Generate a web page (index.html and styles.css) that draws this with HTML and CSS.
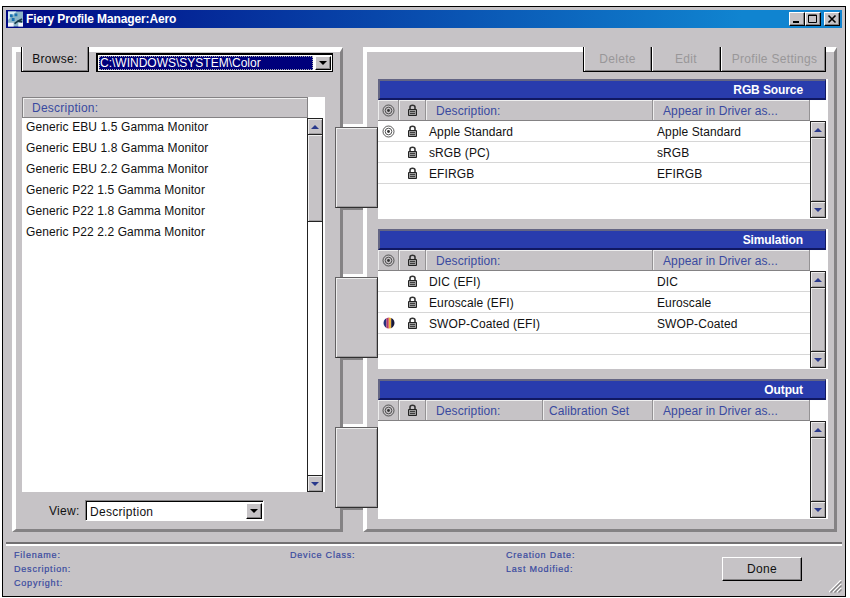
FILE: index.html
```html
<!DOCTYPE html>
<html lang="en">
<head>
    <meta charset="UTF-8">
    <meta name="viewport" content="width=device-width, initial-scale=1.0">
    <title>Fiery Profile Manager:Aero</title>
    <link rel="stylesheet" href="styles.css">
</head>
<body>
    <!-- shared icons -->
    <svg class="defs" width="0" height="0">
        <symbol id="target" viewBox="0 0 13 13">
            <circle cx="6.5" cy="6.5" r="5.5" fill="none" stroke="#444" stroke-width="0.9"/>
            <circle cx="6.5" cy="6.5" r="3.3" fill="none" stroke="#444" stroke-width="0.9"/>
            <circle cx="6.5" cy="6.5" r="1.4" fill="#333"/>
        </symbol>
        <symbol id="lock" viewBox="0 0 11 12">
            <path d="M3 6V3.2Q3 1.2 5.5 1.2T8 3.2V6" fill="none" stroke="#333" stroke-width="1.6"/>
            <path d="M1.5 5.5h8v6h-8z" fill="#999" stroke="#222"/>
            <path d="M3 7.5h5M3 9.5h5" stroke="#333" stroke-width="0.9"/>
        </symbol>
        <symbol id="cmyk" viewBox="0 0 12 12">
            <clipPath id="disc"><circle cx="6" cy="6" r="5.5"/></clipPath>
            <g clip-path="url(#disc)">
                <path fill="#29317b" d="M0 0h3.4v12H0z"/>
                <path fill="#b5396b" d="M3.4 0h2.4v12H3.4z"/>
                <path fill="#f2b53c" d="M5.8 0h2.4v12H5.8z"/>
                <path fill="#181838" d="M8.2 0H12v12H8.2z"/>
            </g>
        </symbol>
        <symbol id="up" viewBox="0 0 8 4"><path d="M0 4L4 0l4 4z" fill="#29398c"/></symbol>
        <symbol id="down" viewBox="0 0 8 4"><path d="M0 0h8L4 4z" fill="#29398c"/></symbol>
        <symbol id="drop" viewBox="0 0 8 4"><path d="M0 0h8L4 4z" fill="#000"/></symbol>
    </svg>

    <div class="window">
        <div class="titlebar">
            <svg class="app-icon" viewBox="0 0 16 16">
                <path fill="#8cb5c6" d="M0 0h16v16H0z"/>
                <path fill="#d6eef5" d="M0 0h9L0 9z"/>
                <path fill="#1870b0" d="M2 3h3v3H2zM7 2h3v3H7zM4 7h3v3H4z"/>
                <path fill="#f5f5ff" d="M0 12h6v4H0zM11 12h5v4h-5z"/>
                <path d="M15 8l-4 2-4 3M10 10l5 1" fill="none" stroke="#173747" stroke-width="1.8"/>
            </svg>
            <span class="title">Fiery Profile Manager:Aero</span>
            <div class="win-buttons">
                <button><svg viewBox="0 0 12 10"><path d="M2 8h6" stroke="#000" stroke-width="2"/></svg></button>
                <button><svg viewBox="0 0 12 10"><path d="M1.5 1h8v7.5h-8zM1.5 1.5h8" fill="none" stroke="#000"/></svg></button>
                <button class="close"><svg viewBox="0 0 12 10"><path d="M2.5 1.5l7 7M9.5 1.5l-7 7" stroke="#000" stroke-width="1.6"/></svg></button>
            </div>
        </div>

        <div class="main">
            <div class="panel left">
                <div class="browse-row">
                    <button class="tab browse">Browse:</button>
                    <div class="select path">
                        <span>C:\WINDOWS\SYSTEM\Color</span>
                        <i><svg><use href="#drop"/></svg></i>
                    </div>
                </div>
                <div class="file-list">
                    <div class="head"><span>Description:</span></div>
                    <div class="list-body">
                        <ul>
                            <li>Generic EBU 1.5 Gamma Monitor</li>
                            <li>Generic EBU 1.8 Gamma Monitor</li>
                            <li>Generic EBU 2.2 Gamma Monitor</li>
                            <li>Generic P22 1.5 Gamma Monitor</li>
                            <li>Generic P22 1.8 Gamma Monitor</li>
                            <li>Generic P22 2.2 Gamma Monitor</li>
                        </ul>
                        <div class="scroll">
                            <b><svg><use href="#up"/></svg></b>
                            <div class="thumb short"></div>
                            <div class="track"></div>
                            <b><svg><use href="#down"/></svg></b>
                        </div>
                    </div>
                </div>
                <div class="view-row">
                    <label>View:</label>
                    <div class="select view">
                        <span>Description</span>
                        <i><svg><use href="#drop"/></svg></i>
                    </div>
                </div>
            </div>

            <div class="bridge">
                <div class="gap first"></div>
                <div class="knob"></div>
                <div class="gap"></div>
                <div class="knob"></div>
                <div class="gap"></div>
                <div class="knob"></div>
                <div class="gap last"></div>
            </div>

            <div class="panel right">
                <div class="actions">
                    <button class="tab" disabled>Delete</button>
                    <button class="tab" disabled>Edit</button>
                    <button class="tab wide" disabled>Profile Settings</button>
                </div>

                <div class="profiles">
                    <h2>RGB Source</h2>
                    <div class="cols">
                        <span><svg class="target"><use href="#target"/></svg></span>
                        <span><svg class="lock"><use href="#lock"/></svg></span>
                        <span>Description:</span>
                        <span>Appear in Driver as...</span>
                    </div>
                    <div class="list-body">
                        <div class="rows">
                            <div class="row">
                                <span><svg class="target"><use href="#target"/></svg></span>
                                <span><svg class="lock"><use href="#lock"/></svg></span>
                                <span>Apple Standard</span>
                                <span>Apple Standard</span>
                            </div>
                            <div class="row">
                                <span></span>
                                <span><svg class="lock"><use href="#lock"/></svg></span>
                                <span>sRGB (PC)</span>
                                <span>sRGB</span>
                            </div>
                            <div class="row">
                                <span></span>
                                <span><svg class="lock"><use href="#lock"/></svg></span>
                                <span>EFIRGB</span>
                                <span>EFIRGB</span>
                            </div>
                        </div>
                        <div class="scroll">
                            <b><svg><use href="#up"/></svg></b>
                            <div class="thumb"></div>
                            <b><svg><use href="#down"/></svg></b>
                        </div>
                    </div>
                </div>

                <div class="profiles">
                    <h2>Simulation</h2>
                    <div class="cols">
                        <span><svg class="target"><use href="#target"/></svg></span>
                        <span><svg class="lock"><use href="#lock"/></svg></span>
                        <span>Description:</span>
                        <span>Appear in Driver as...</span>
                    </div>
                    <div class="list-body">
                        <div class="rows">
                            <div class="row">
                                <span></span>
                                <span><svg class="lock"><use href="#lock"/></svg></span>
                                <span>DIC (EFI)</span>
                                <span>DIC</span>
                            </div>
                            <div class="row">
                                <span></span>
                                <span><svg class="lock"><use href="#lock"/></svg></span>
                                <span>Euroscale (EFI)</span>
                                <span>Euroscale</span>
                            </div>
                            <div class="row">
                                <span><svg class="cmyk"><use href="#cmyk"/></svg></span>
                                <span><svg class="lock"><use href="#lock"/></svg></span>
                                <span>SWOP-Coated (EFI)</span>
                                <span>SWOP-Coated</span>
                            </div>
                            <div class="row"></div>
                        </div>
                        <div class="scroll">
                            <b><svg><use href="#up"/></svg></b>
                            <div class="thumb"></div>
                            <b><svg><use href="#down"/></svg></b>
                        </div>
                    </div>
                </div>

                <div class="profiles">
                    <h2>Output</h2>
                    <div class="cols four">
                        <span><svg class="target"><use href="#target"/></svg></span>
                        <span><svg class="lock"><use href="#lock"/></svg></span>
                        <span>Description:</span>
                        <span class="calibration">Calibration Set</span>
                        <span>Appear in Driver as...</span>
                    </div>
                    <div class="list-body">
                        <div class="rows"></div>
                        <div class="scroll">
                            <b><svg><use href="#up"/></svg></b>
                            <div class="thumb"></div>
                            <b><svg><use href="#down"/></svg></b>
                        </div>
                    </div>
                </div>
            </div>
        </div>

        <div class="footer">
            <div class="info">
                <p>Filename:</p>
                <p>Description:</p>
                <p>Copyright:</p>
            </div>
            <div class="info">
                <p>Device Class:</p>
            </div>
            <div class="info">
                <p>Creation Date:</p>
                <p>Last Modified:</p>
            </div>
            <button class="done">Done</button>
            <svg class="grip" viewBox="0 0 13 13">
                <path d="M0 12L12 0M4 12l8-8M8 12l4-4" stroke="#fff" stroke-width="1.2"/>
                <path d="M1.5 12.5l11-11M5.5 12.5l7-7M9.5 12.5l3-3" stroke="#848284" stroke-width="1.3"/>
            </svg>
        </div>
    </div>
</body>
</html>
```
FILE: styles.css
```css
* {
  box-sizing: border-box;
  margin: 0;
  padding: 0;
}

body {
  --face: #c6c3c6;
  --shade: #848284;
  --blue: #293cad;
  --label: #394aa0;

  width: 850px;
  height: 598px;
  padding: 6px 0 0 2px;
  overflow: hidden;
  background: #fff;
  color: #111;
  font: 12px/14px "Liberation Sans", Arial, sans-serif;
  letter-spacing: 0.1px;
}

button {
  font: inherit;
  letter-spacing: inherit;
  color: inherit;
  background: var(--face);
  border: none;
}

svg {
  display: block;
}

.defs {
  position: absolute;
}

.window {
  width: 844px;
  height: 591px;
  padding: 3px;
  border: 1px solid #000;
  background: var(--face);
  display: flex;
  flex-direction: column;
}

/* title bar */
.titlebar {
  height: 18px;
  flex: none;
  display: flex;
  align-items: center;
  padding: 0 2px 0 2px;
  background: linear-gradient(90deg, #000884, #1084d0 88%);
  color: #fff;
}

.app-icon {
  width: 15px;
  height: 16px;
}

.title {
  margin-left: 3px;
  font-weight: bold;
  letter-spacing: -0.12px;
}

.win-buttons {
  margin-left: auto;
  display: flex;
}

.win-buttons button {
  width: 16px;
  height: 14px;
  padding: 1px;
  border: 1px solid;
  border-color: #fff #000 #000 #fff;
  box-shadow: inset -1px -1px var(--shade);
}

.win-buttons .close {
  margin-left: 3px;
}

.win-buttons svg {
  width: 12px;
  height: 10px;
}

/* two panels joined by the knobs */
.main {
  height: 485px;
  margin: 19px 5px 0 6px;
  flex: none;
  display: flex;
}

.panel {
  border-style: solid;
  border-width: 5px 3px 3px 4px;
  border-color: #fff var(--shade) var(--shade) #fff;
}

.left {
  width: 331px;
}

.right {
  width: 474px;
  padding-left: 11px;
}

.browse-row {
  display: flex;
  height: 25px;
  margin: -5px 0 0 5px;
}

.tab {
  width: 69px;
  height: 25px;
  border-style: solid;
  border-width: 0 1px 1px 0;
  border-color: #000;
  box-shadow: inset 1px 0 #fff, inset -1px -1px var(--shade);
  letter-spacing: 0.3px;
}

.browse {
  width: 68px;
  border-left-width: 1px;
}

.tab:disabled {
  color: #999799;
}

.select {
  display: flex;
  background: #fff;
  border: 1px solid;
  border-color: var(--shade) #fff #fff var(--shade);
  box-shadow: inset 1px 1px #000;
}

.select span {
  flex: 1;
}

.select i {
  width: 16px;
  display: flex;
  align-items: center;
  justify-content: center;
  background: var(--face);
  border: 1px solid;
  border-color: #fff #000 #000 #fff;
  box-shadow: inset -1px -1px var(--shade);
}

.select svg {
  width: 8px;
  height: 4px;
}

.path {
  width: 237px;
  height: 19px;
  margin: 6px 0 0 7px;
  padding: 2px 1px 1px 2px;
  border-color: #000;
}

.path span {
  margin-right: 2px;
  padding-left: 1px;
  background: #00007b;
  outline: 1px dotted #aaa;
  outline-offset: -1px;
  color: #fff;
  letter-spacing: 0;
}

.file-list {
  width: 303px;
  height: 395px;
  margin: 25px 0 0 6px;
  background: #fff;
}

.head {
  width: 286px;
  height: 21px;
  padding: 3px 0 0 9px;
  background: var(--face);
  border: 1px solid var(--shade);
  box-shadow: inset 1px 1px #eee;
  color: var(--label);
  letter-spacing: 0.25px;
}

.list-body {
  display: flex;
}

.file-list ul {
  width: 285px;
  height: 374px;
  list-style: none;
}

.file-list li {
  height: 21px;
  padding: 2px 0 0 4px;
}

/* scroll bars */
.scroll {
  width: 16px;
  height: 97px;
  display: flex;
  flex-direction: column;
  border: 1px solid #222;
}

.scroll b {
  height: 15px;
  flex: none;
  display: flex;
  align-items: center;
  justify-content: center;
  background: var(--face);
  box-shadow: inset 1px 1px #eee, inset -1px -1px #a09ea0;
}

.scroll svg {
  width: 8px;
  height: 4px;
}

.thumb {
  flex: 1;
  background: var(--face);
  border: solid #222;
  border-width: 1px 0;
  box-shadow: inset 1px 1px #eee, inset -1px -1px #a09ea0;
}

.thumb.short {
  flex: none;
  height: 88px;
}

.track {
  flex: 1;
  border-bottom: 1px solid #222;
}

.file-list .scroll {
  height: 374px;
}

.view-row {
  display: flex;
  align-items: center;
  margin: 8px 0 0 33px;
  letter-spacing: 0.3px;
}

.view-row label {
  width: 36px;
}

.view {
  width: 179px;
  height: 21px;
  padding: 2px 1px 1px 4px;
}

.view span {
  padding-top: 2px;
}

/* knobs lie over the edges of both panels */
.bridge {
  width: 20px;
  display: flex;
  flex-direction: column;
  position: relative;
  z-index: 1;
}

.gap {
  height: 69px;
  border-top: 2px solid var(--shade);
  border-bottom: 3px solid #fff;
}

.gap.first {
  height: 80px;
  border-top: none;
}

.gap.last {
  flex: 1;
  border-bottom: none;
}

.knob {
  width: 43px;
  height: 81px;
  margin-left: -8px;
  flex: none;
  background: var(--face);
  border: 1px solid;
  border-color: #636163 #313031 #313031 #636163;
  box-shadow: inset 1px 1px #eee, inset -1px -1px #a09ea0;
}

/* profile lists */
.actions {
  display: flex;
  justify-content: flex-end;
  height: 25px;
  margin: -5px 8px 7px 0;
}

.actions .tab:first-child {
  border-left-width: 1px;
}

.actions .wide {
  width: 105px;
  padding-left: 3px;
}

.profiles {
  width: 450px;
  height: 140px;
  margin-bottom: 10px;
  background: #fff;
}

.profiles h2 {
  width: 448px;
  height: 21px;
  padding: 2px 22px 0 0;
  background: var(--blue);
  border: solid;
  border-width: 2px 1px 2px 2px;
  border-color: #636584 #101863 #101863 #636584;
  color: #fff;
  font-size: 12px;
  line-height: 14px;
  text-align: right;
  letter-spacing: -0.1px;
}

.cols,
.row {
  display: grid;
  grid-template-columns: 21px 27px 227px 157px;
}

.cols.four {
  grid-template-columns: 21px 27px 117px 110px 157px;
}

.cols {
  width: 432px;
  height: 21px;
  background: var(--face);
  color: var(--label);
  border-bottom: 1px solid var(--shade);
}

.cols span {
  padding: 4px 0 0 10px;
  border-right: 1px solid #949294;
  box-shadow: inset 1px 1px #eee;
}

.cols .calibration {
  padding-left: 6px;
}

.rows {
  width: 432px;
  height: 98px;
}

.row {
  height: 21px;
  border-bottom: 1px solid #d6d6d6;
}

.row span {
  padding: 4px 0 0 3px;
}

.row span:last-child {
  padding-left: 4px;
}

.cols span:nth-child(-n+2),
.row span:nth-child(-n+2) {
  padding: 0;
  display: flex;
  align-items: center;
  justify-content: center;
}

.target {
  width: 13px;
  height: 13px;
}

.lock {
  width: 11px;
  height: 12px;
}

.cmyk {
  width: 12px;
  height: 12px;
}

/* footer */
.footer {
  flex: 1;
  display: flex;
  position: relative;
  margin-top: 10px;
  padding: 4px 0 0 8px;
  border-top: 2px solid #737173;
  box-shadow: inset 0 2px #fff;
  color: var(--label);
  font-size: 9px;
  letter-spacing: 0.8px;
  -webkit-text-stroke: 0.2px var(--label);
}

.info {
  width: 276px;
}

.info:nth-child(2) {
  width: 216px;
}

.info:nth-child(3) {
  width: 216px;
}

.done {
  width: 80px;
  height: 24px;
  margin-top: 9px;
  border: 1px solid;
  border-color: #fff #000 #000 #fff;
  box-shadow: inset -1px -1px var(--shade);
  color: #111;
  font-size: 12px;
  letter-spacing: 0.3px;
  -webkit-text-stroke: 0;
}

.grip {
  position: absolute;
  right: 0;
  bottom: 0;
  width: 13px;
  height: 13px;
}
```
